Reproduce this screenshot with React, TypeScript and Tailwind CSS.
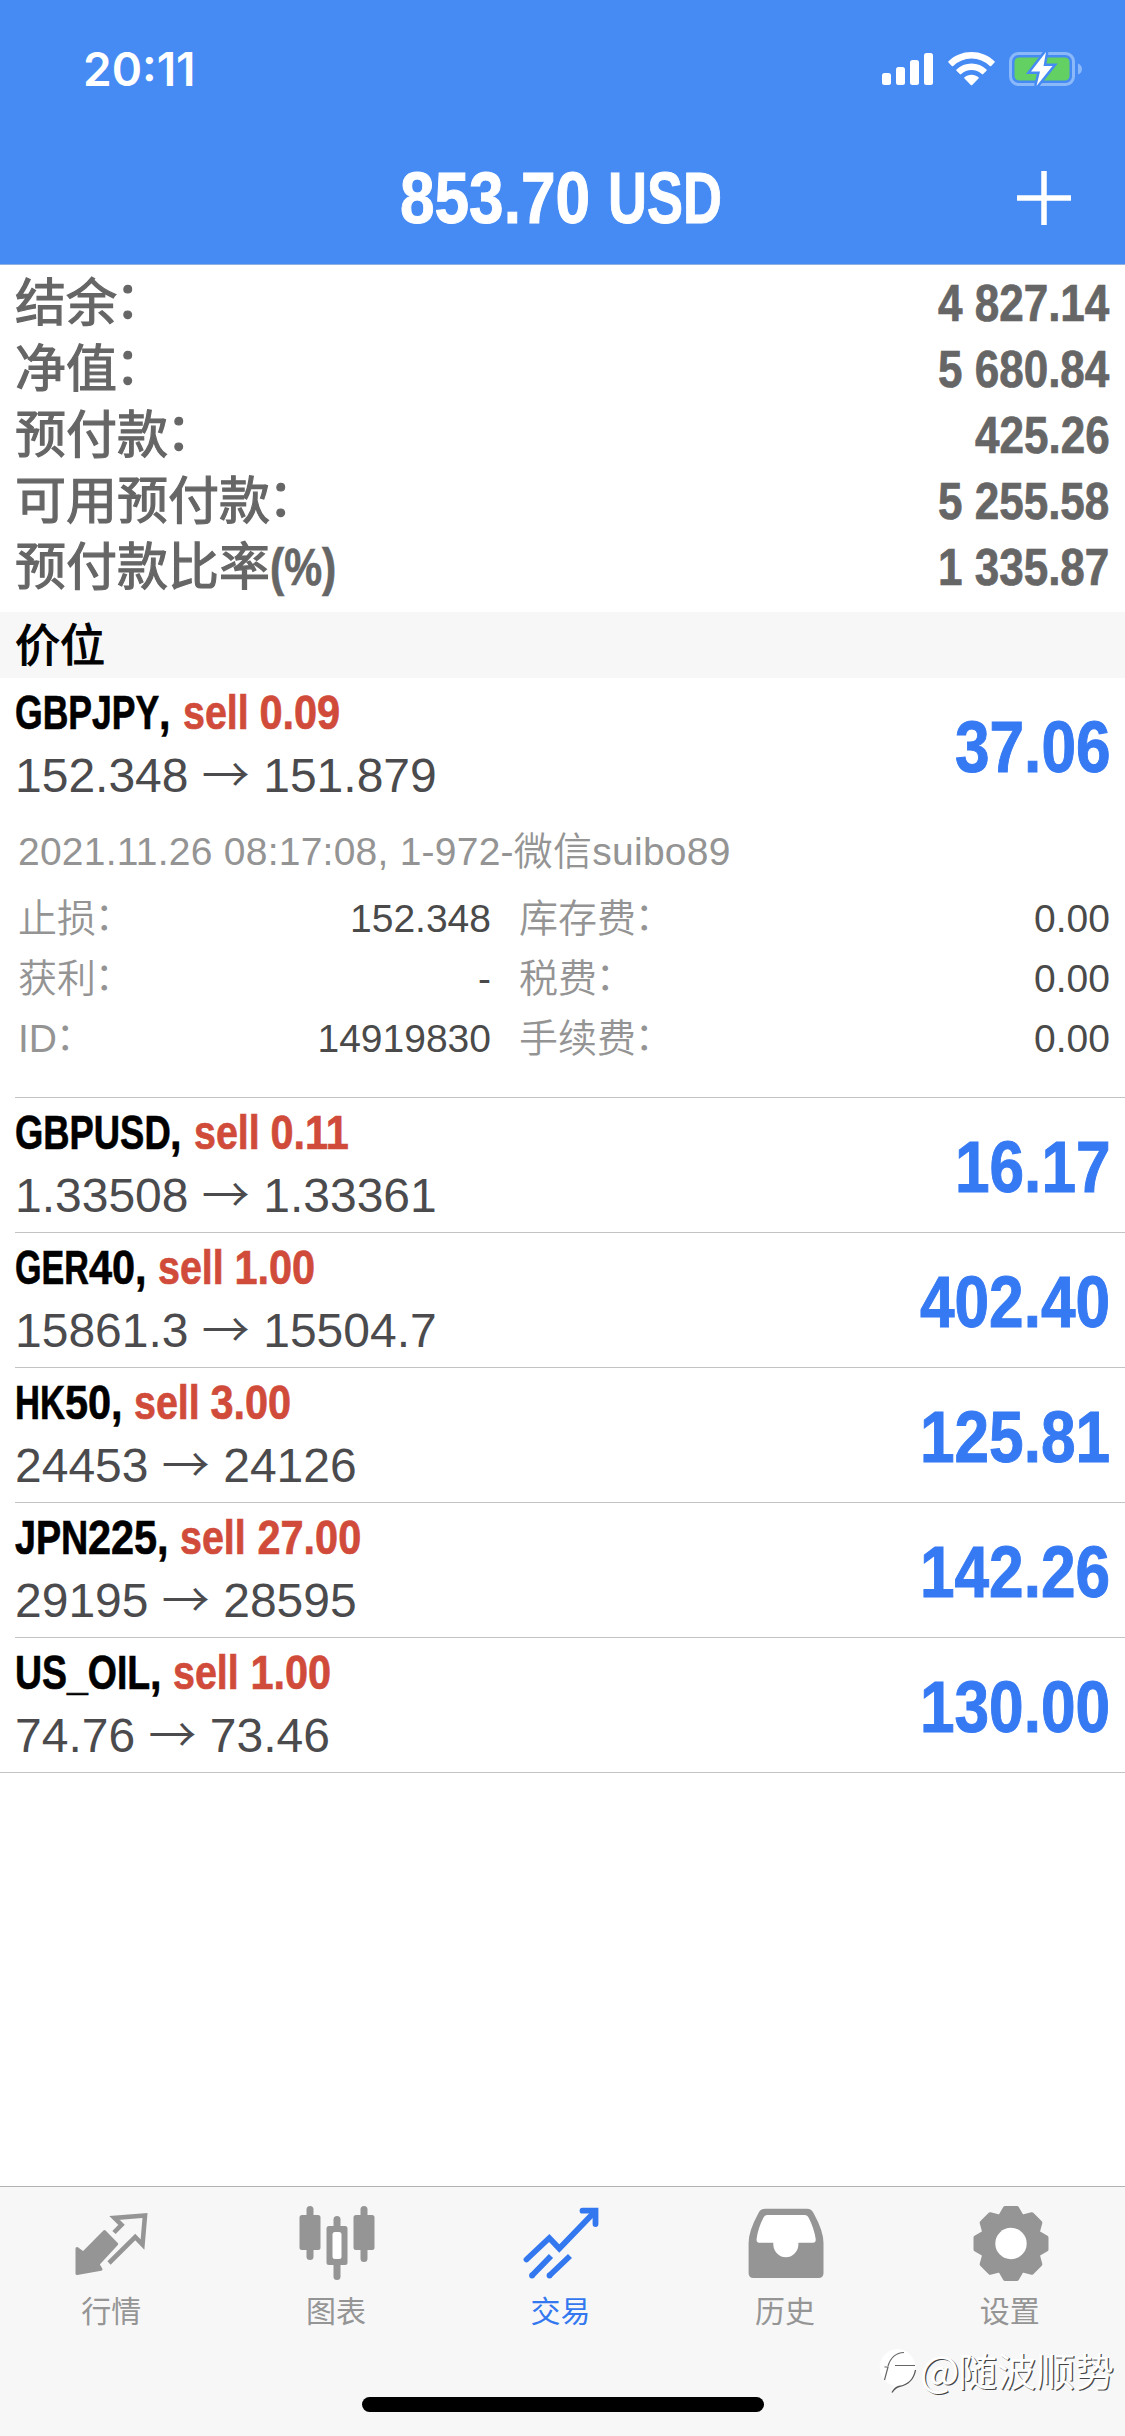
import { useLayoutEffect, useRef, useState } from "react"
import type { ReactNode } from "react"

interface Position {
  symbol: string
  side: string
  volume: string
  open: string
  current: string
  profit: string
}

const SUMMARY = [
  { label: "结余", value: "4 827.14" },
  { label: "净值", value: "5 680.84" },
  { label: "预付款", value: "425.26" },
  { label: "可用预付款", value: "5 255.58" },
  { label: "预付款比率", suffix: "(%)", value: "1 335.87" },
]

const POSITIONS: Position[] = [
  { symbol: "GBPJPY", side: "sell", volume: "0.09", open: "152.348", current: "151.879", profit: "37.06" },
  { symbol: "GBPUSD", side: "sell", volume: "0.11", open: "1.33508", current: "1.33361", profit: "16.17" },
  { symbol: "GER40", side: "sell", volume: "1.00", open: "15861.3", current: "15504.7", profit: "402.40" },
  { symbol: "HK50", side: "sell", volume: "3.00", open: "24453", current: "24126", profit: "125.81" },
  { symbol: "JPN225", side: "sell", volume: "27.00", open: "29195", current: "28595", profit: "142.26" },
  { symbol: "US_OIL", side: "sell", volume: "1.00", open: "74.76", current: "73.46", profit: "130.00" },
]

const DETAILS = [
  { left: "止损", leftValue: "152.348", right: "库存费", rightValue: "0.00" },
  { left: "获利", leftValue: "-", right: "税费", rightValue: "0.00" },
  { left: "ID", leftValue: "14919830", right: "手续费", rightValue: "0.00" },
]

// Squeezes its text horizontally and takes only the squeezed width in the line
function Squeeze({ text, ratio }: { text: string; ratio: number }) {
  const ref = useRef<HTMLSpanElement>(null)
  const [width, setWidth] = useState<number>()

  useLayoutEffect(() => {
    if (ref.current) setWidth(ref.current.offsetWidth * ratio)
  }, [text, ratio])

  return (
    <span className="inline-block whitespace-pre" style={{ width }}>
      <span ref={ref} className="inline-block origin-left whitespace-pre" style={{ transform: `scaleX(${ratio})` }}>
        {text}
      </span>
    </span>
  )
}

// Capitals don't all condense equally, so some runs need their own ratio
const CAPS_RATIO: Record<string, number> = {
  GBPUSD: 0.758,
  GER: 0.71,
  HK: 0.72,
  JPN: 0.785,
  US_OIL: 0.78,
  USD: 0.75,
}

function ratioFor(run: string) {
  if (/[A-Z_]/.test(run)) return CAPS_RATIO[run] ?? 0.74
  if (/[(%)]/.test(run)) return 0.835
  if (/[a-z]/.test(run)) return 0.82
  return 0.863
}

// Condensed bold face: capitals are narrower than figures
function Condensed({ text }: { text: string }) {
  const runs = text.match(/[A-Z_]+|[a-z]+|[(%)]+|[^A-Za-z_(%)]+/g) ?? []
  return (
    <span className="whitespace-pre font-bold [-webkit-text-stroke:0.014em]">
      {runs.map((run, i) => (
        <Squeeze key={i} text={run} ratio={ratioFor(run)} />
      ))}
    </span>
  )
}

function Colon() {
  return <span className="relative right-[0.04em] bottom-[0.06em]">：</span>
}

function StatusBar() {
  return (
    <div className="flex h-[138px] items-center justify-between pr-[42px] pl-[83px] text-white">
      <span className="font-['Inter',sans-serif] text-[46px] leading-none font-semibold">20:11</span>
      <div className="flex items-center gap-[14px]">
        <svg width="52" height="34" viewBox="0 0 52 34" fill="currentColor">
          <rect x="0" y="21" width="9" height="12" rx="2.5" />
          <rect x="14" y="15" width="9" height="18" rx="2.5" />
          <rect x="28" y="8" width="9" height="25" rx="2.5" />
          <rect x="42" y="1" width="9" height="32" rx="2.5" />
        </svg>
        <svg width="47" height="34" viewBox="0 0 47 34" fill="currentColor">
          <path d="M23.5 0C32.500 0 40.500 3.400 46.500 9.200Q47.100 9.900 46.500 10.600L43.200 13.900Q42.500 14.500 41.800 13.900A26.500 26.500 0 0 0 5.200 13.900Q4.500 14.500 3.800 13.900L.5 10.600Q-.1 9.900 .5 9.200C6.500 3.400 14.500 0 23.500 0Z" />
          <path d="M23.500 11.500C29.300 11.500 34.500 13.700 38.500 17.400Q39.100 18.100 38.500 18.800L35.200 22.100Q34.500 22.700 33.800 22.100A15.200 15.200 0 0 0 13.200 22.100Q12.500 22.700 11.800 22.100L8.500 18.800Q7.900 18.100 8.500 17.400C12.500 13.700 17.700 11.500 23.500 11.500Z" />
          <path d="M23.500 22.700C26.200 22.700 28.600 23.600 30.500 25.200Q31.200 25.900 30.500 26.600L24.200 33Q23.500 33.600 22.800 33L16.500 26.600Q15.800 25.900 16.500 25.200C18.400 23.600 20.800 22.700 23.500 22.700Z" />
        </svg>
        <svg width="74" height="36" viewBox="0 0 74 36">
          <rect x="1.500" y="2.500" width="63" height="31" rx="8" fill="none" stroke="#8bb8f9" strokeWidth="3" />
          <path d="M69 12.500Q73 14 73 18Q73 22 69 23.500Z" fill="#8bb8f9" />
          <rect x="5.500" y="6.500" width="55" height="23" rx="4.500" fill="#62d063" />
          <path d="M37 1L22 20.500H31L27.500 35L43.500 15H34.500Z" fill="#fff" stroke="#468bf4" strokeWidth="5" />
          <path d="M37 1L22 20.500H31L27.500 35L43.500 15H34.500Z" fill="#fff" />
        </svg>
      </div>
    </div>
  )
}

function Header() {
  return (
    <header className="h-[265px] border-b border-[#8fb0e0] bg-[#468bf4]">
      <StatusBar />
      <div className="grid h-[120px] grid-cols-[1fr_auto_1fr] items-center text-white">
        <span />
        <h1 className="pr-[3px] text-[72px] leading-[120px]">
          <Condensed text="853.70 USD" />
        </h1>
        <svg className="mr-[53px] justify-self-end" width="56" height="56" viewBox="0 0 56 56" stroke="currentColor" strokeWidth="5.500">
          <path d="M28 1V55M1 28H55" />
        </svg>
      </div>
    </header>
  )
}

function Summary() {
  return (
    <section className="h-[347px] pt-[6px] pr-[15px] pl-[15px] text-[51px] leading-[66px] text-[#666666]">
      {SUMMARY.map((row) => (
        <div key={row.label} className="flex h-[66px] justify-between">
          <span className="whitespace-nowrap">
            <span className="[-webkit-text-stroke:1.2px]">{row.label}</span>
            {row.suffix ? <Condensed text={row.suffix} /> : <span className="[-webkit-text-stroke:1.2px]"><Colon /></span>}
          </span>
          <Condensed text={row.value} />
        </div>
      ))}
    </section>
  )
}

function PositionRow({ position, children }: { position: Position; children?: ReactNode }) {
  return (
    <div className="border-b border-[#c3c3c5] pr-[15px] last:-ml-[15px] last:pl-[15px]">
      <div className="flex h-[134px] items-center justify-between pt-[3px]">
        <div className="-mt-[6px] text-[48px] leading-[63px]">
          <div className="h-[63px] text-[#d04b3a]">
            <span className="text-black">
              <Condensed text={`${position.symbol}, `} />
            </span>
            <Condensed text={`${position.side} ${position.volume}`} />
          </div>
          <div className="h-[63px] whitespace-pre text-[#4b4b4e]">
            {position.open} <span className="font-['Noto_Sans_CJK_SC',sans-serif] leading-none font-[350]">→</span> {position.current}
          </div>
        </div>
        <div className="text-[72px] leading-[72px] text-[#3579f3]">
          <Condensed text={position.profit} />
        </div>
      </div>
      {children}
    </div>
  )
}

function PositionDetails() {
  return (
    <div className="pt-1.5 pb-7 pl-[3px] text-[39px] text-[#949494]">
      <div className="h-[71px] leading-[67px] font-[350] tracking-[0.24px]">2021.11.26 08:17:08, 1-972-微信suibo89</div>
      {DETAILS.map((row) => (
        <div key={row.left} className="grid h-[60px] grid-cols-[473px_1fr] gap-x-7 leading-[60px] font-[350]">
          <div className="flex justify-between">
            <span>{row.left}<Colon /></span>
            <span className="text-[#4a4a4a]">{row.leftValue}</span>
          </div>
          <div className="flex justify-between">
            <span>{row.right}<Colon /></span>
            <span className="text-[#4a4a4a]">{row.rightValue}</span>
          </div>
        </div>
      ))}
    </div>
  )
}

function QuotesIcon() {
  return (
    <svg width="78" height="78" viewBox="0 0 78 78">
      <path d="M4 43.500L10.200 48L31.500 26.500L43.700 39L25 59.300L28 64.300L4 68.500Z" fill="currentColor" stroke="currentColor" strokeWidth="3" strokeLinejoin="round" />
      <path d="M41 27.500L48.500 19.800L41.500 13L72 10.500L69.500 39.500L62.200 32L36 58" fill="none" stroke="currentColor" strokeWidth="4.600" />
    </svg>
  )
}

function ChartIcon() {
  return (
    <svg width="78" height="78" viewBox="0 0 78 78" fill="currentColor">
      <rect x="1.500" y="10" width="21" height="35" rx="2.500" />
      <rect x="8.500" y="1" width="7" height="54" rx="3.500" />
      <rect x="28.500" y="21" width="21" height="39" rx="2.500" />
      <rect x="35.500" y="11" width="7" height="64" rx="3.500" />
      <rect x="34.500" y="27" width="9" height="27" rx="2.500" fill="#fff" />
      <rect x="55.500" y="10" width="21" height="35" rx="2.500" />
      <rect x="62.500" y="1" width="7" height="56" rx="3.500" />
    </svg>
  )
}

function TradeIcon() {
  return (
    <svg width="78" height="78" viewBox="0 0 78 78" fill="none" stroke="currentColor" strokeWidth="5.800">
      <path d="M4.500 54.500L27.300 33L37.300 43.500L73 6.500" strokeLinecap="round" />
      <path d="M60.500 5.700H73.500V19" strokeLinecap="round" />
      <path d="M10 70.500L29 51M27.500 70.500L48 51" />
      <circle cx="10" cy="70.500" r="2.900" fill="currentColor" stroke="none" />
      <circle cx="27.500" cy="70.500" r="2.900" fill="currentColor" stroke="none" />
    </svg>
  )
}

function HistoryIcon() {
  return (
    <svg width="78" height="78" viewBox="0 0 78 78">
      <path d="M18 3.700H60Q64.500 3.700 66.500 8Q76.500 26 76.500 38V68Q76.500 73 71.500 73H6.600Q1.600 73 1.600 68V38Q1.600 26 11.500 8Q13.500 3.700 18 3.700Z" fill="currentColor" />
      <path d="M20.500 10H57.500Q60.500 10 61.800 13Q67 23 68.700 34Q69 37.700 66 37.700H51.400V40A12.600 13.500 0 0 1 26.300 40V37.700H12Q9.200 37.700 9.600 34Q11 23 16.300 13Q17.500 10 20.500 10Z" fill="#fff" />
    </svg>
  )
}

function SettingsIcon() {
  return (
    <svg width="78" height="78" viewBox="-39 -38.500 78 78" fill="currentColor">
      <circle r="30" />
      {[0, 45, 90, 135, 180, 225, 270, 315].map((angle) => (
        <path
          key={angle}
          transform={`rotate(${angle})`}
          d="M-11.500 -26L-6 -35.500H6L11.500 -26Z"
          stroke="currentColor"
          strokeWidth="4"
          strokeLinejoin="round"
        />
      ))}
      <circle r="15.700" fill="#fff" />
    </svg>
  )
}

const TABS = [
  { label: "行情", Icon: QuotesIcon },
  { label: "图表", Icon: ChartIcon },
  { label: "交易", Icon: TradeIcon, active: true },
  { label: "历史", Icon: HistoryIcon },
  { label: "设置", Icon: SettingsIcon },
]

function TabBar() {
  return (
    <nav className="flex h-[250px] flex-col items-center justify-between border-t border-[#b2b2b2] bg-[#f7f7f7] pb-6">
      <div className="grid w-full grid-cols-5 pt-[18px] pr-[2px]">
        {TABS.map(({ label, Icon, active }) => (
          <div key={label} className={`flex flex-col items-center gap-1 ${active ? "text-[#3478f0]" : "text-[#959595]"}`}>
            <Icon />
            <span className="pr-[2px] font-['Noto_Sans_CJK_SC',sans-serif] text-[30px] leading-[45px]">{label}</span>
          </div>
        ))}
      </div>
      <div className="h-[15px] w-[402px] rounded-full bg-black" />
    </nav>
  )
}

function Watermark() {
  return (
    <div className="absolute right-[11px] bottom-[41px] flex items-center text-white">
      <svg className="mt-[6px]" width="42" height="46" viewBox="0 0 42 46">
        <path d="M19 0A18.500 18.500 0 0 1 37.500 18.500C37.500 30 29 36.500 20.500 37L14 43L16 36.500A18.500 18.500 0 0 1 19 0Z" fill="currentColor" />
        <path d="M14 43.500Q17 38.500 21 37.500Q35 35 37.500 21" fill="none" stroke="#555" strokeWidth="1.300" />
        <path d="M6.500 31L10 18H6.500M10 17Q14 4 26 3.500M17 16.500H37" fill="none" stroke="#666" strokeWidth="1.200" />
      </svg>
      <span className="flex items-center font-['Noto_Sans_CJK_SC',sans-serif] text-[39px] leading-[48px] [text-shadow:1.200px_1px_0.500px_#444]">
        <span className="text-[42px] tracking-[-1.5px]">@</span>随波顺势
      </span>
    </div>
  )
}

export default function App() {
  return (
    <div className="relative flex h-[2436px] w-[1125px] flex-col overflow-hidden bg-white font-['Liberation_Sans','Noto_Sans_CJK_SC',sans-serif]">
      <Header />
      <Summary />
      <h2 className="h-[66px] bg-[#f7f7f7] px-[15px] pt-[2px] text-[45px] leading-[65px] text-black [-webkit-text-stroke:1.2px]">价位</h2>
      <main className="flex-1 pl-[15px]">
        {POSITIONS.map((position, i) => (
          <PositionRow key={position.symbol} position={position}>
            {i === 0 && <PositionDetails />}
          </PositionRow>
        ))}
      </main>
      <TabBar />
      <Watermark />
    </div>
  )
}
